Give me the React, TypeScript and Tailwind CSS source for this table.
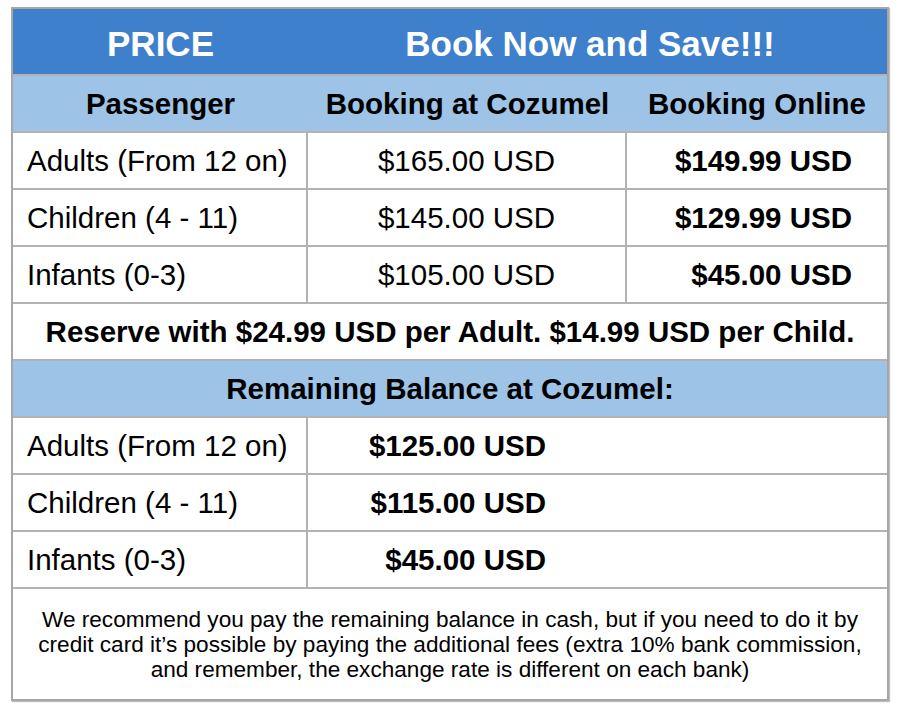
import React from 'react';

const prices = [
    { label: 'Adults (From 12 on)', local: '$165.00 USD', online: '$149.99 USD' },
    { label: 'Children (4 - 11)', local: '$145.00 USD', online: '$129.99 USD' },
    { label: 'Infants (0-3)', local: '$105.00 USD', online: '$45.00 USD' },
];

const balance = [
    { label: 'Adults (From 12 on)', amount: '$125.00 USD' },
    { label: 'Children (4 - 11)', amount: '$115.00 USD' },
    { label: 'Infants (0-3)', amount: '$45.00 USD' },
];

export default function App() {
    return (
        <div className="min-h-[709px] w-[900px] bg-white pt-[7px] pl-[11px] font-['Liberation_Sans',Arial,sans-serif] text-black">
            <div className="w-[878px] border-2 border-[#a6a6a6] shadow-[1px_1px_1px_rgba(0,0,0,0.25)]">
                {/* Title bar */}
                <div className="flex h-[65px] items-center bg-[#3e80cb] pt-[5px] text-[35px] font-bold text-white">
                    <div className="w-[295px] text-center">PRICE</div>
                    <div className="flex-1 pr-[15px] text-center">Book Now and Save!!!</div>
                </div>

                {/* Column headers */}
                <div className="flex h-[57px] items-center border-t-2 border-[#b3b3b3] bg-[#9dc3e6] pt-[2px] text-[29.5px] font-bold">
                    <div className="w-[295px] text-center">Passenger</div>
                    <div className="w-[319px] text-center">Booking at Cozumel</div>
                    <div className="flex-1 text-center">Booking Online</div>
                </div>

                {prices.map((row) => (
                    <div key={row.label} className="flex h-[57px] border-t-2 border-[#b3b3b3] text-[29.5px]">
                        <div className="flex w-[295px] items-center border-r-2 border-[#b3b3b3] pt-[2px] pl-[14px]">{row.label}</div>
                        <div className="flex w-[319px] items-center justify-center border-r-2 border-[#b3b3b3] pt-[2px]">{row.local}</div>
                        <div className="flex flex-1 items-center justify-end pt-[2px] pr-[35px] font-bold">{row.online}</div>
                    </div>
                ))}

                <div className="flex h-[57px] items-center justify-center border-t-2 border-[#b3b3b3] pt-[2px] text-[29.5px] font-bold">
                    Reserve with $24.99 USD per Adult. $14.99 USD per Child.
                </div>

                <div className="flex h-[57px] items-center justify-center border-t-2 border-[#b3b3b3] bg-[#9dc3e6] pt-[2px] text-[29.5px] font-bold">
                    Remaining Balance at Cozumel:
                </div>

                {balance.map((row) => (
                    <div key={row.label} className="flex h-[57px] border-t-2 border-[#b3b3b3] text-[29.5px]">
                        <div className="flex w-[295px] items-center border-r-2 border-[#b3b3b3] pt-[2px] pl-[14px]">{row.label}</div>
                        <div className="flex w-[238px] items-center justify-end pt-[2px] font-bold">{row.amount}</div>
                    </div>
                ))}

                <div className="flex h-[112px] items-center justify-center border-t-2 border-[#b3b3b3] px-[16px] text-center text-[22.6px] leading-[25px]">
                    We recommend you pay the remaining balance in cash, but if you need to do it by credit card it’s possible by paying the additional fees (extra 10% bank commission, and remember, the exchange rate is different on each bank)
                </div>
            </div>
        </div>
    );
}
